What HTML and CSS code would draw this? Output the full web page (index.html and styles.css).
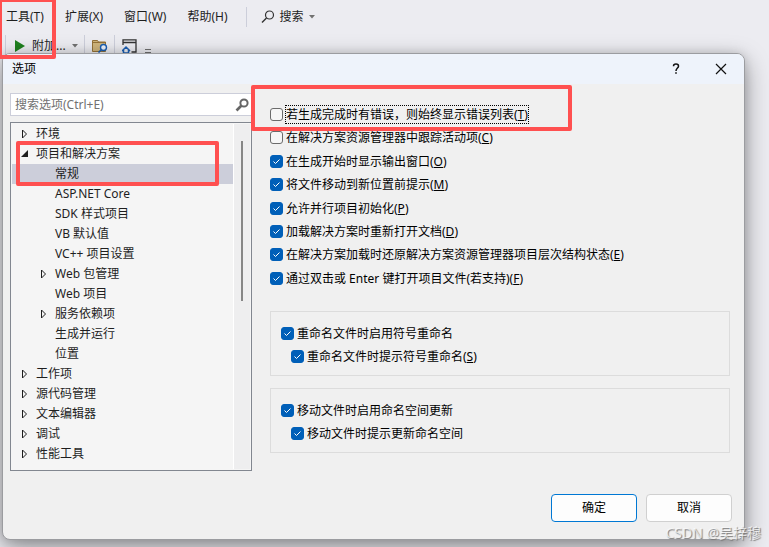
FILE: index.html
```
<!DOCTYPE html>
<html lang="zh-CN">
<head>
  <meta charset="UTF-8" />
  <meta name="viewport" content="width=device-width, initial-scale=1.0"/>
  <title>选项</title>
  <link rel="stylesheet" href="styles.css">
</head>
<body>
  <svg class="symbols" aria-hidden="true">
    <symbol id="closed" viewBox="0 0 8 10"><path d="M1.5 1v8l4-4z" fill="none" stroke="#1e1e1e"/></symbol>
    <symbol id="opened" viewBox="0 0 8 10"><path d="M7 1v7H0z" fill="#1e1e1e"/></symbol>
    <symbol id="down" viewBox="0 0 6 4"><path d="M0 0h6L3 3.5z" fill="#717171"/></symbol>
  </svg>

  <div class="menubar">
    <nav class="menus">
      <button type="button">工具(T)</button>
      <button type="button">扩展(X)</button>
      <button type="button">窗口(W)</button>
      <button type="button">帮助(H)</button>
    </nav>
    <button type="button" class="search-menu">
      <svg width="14" height="14" viewBox="0 0 14 14"><circle cx="8.5" cy="5" r="4" fill="none" stroke="#333" stroke-width="1.2"/><path d="M5.5 8L1 12.5" stroke="#333" stroke-width="1.4"/></svg>
      搜索
      <svg width="6" height="4"><use href="#down"/></svg>
    </button>
  </div>

  <div class="toolbar">
    <button type="button" class="run">
      <svg width="12" height="14" viewBox="0 0 12 14"><path d="M1 1v12l10-6z" fill="#1f801f"/></svg>
      附加...
      <svg width="6" height="4"><use href="#down"/></svg>
    </button>
    <button type="button" aria-label="在文件中查找">
      <svg width="16" height="14" viewBox="0 0 16 14"><path d="M.5 12.500V1.500h5l1 1.500h7v9.500z" fill="#d0b57c" stroke="#957338"/><path d="M.5 3.500h13" stroke="#957338"/><circle cx="11.500" cy="8.500" r="3" fill="#eef3fb" stroke="#1a5fb4" stroke-width="1.400"/><path d="M9.500 10.500L6.500 13.500" stroke="#1a5fb4" stroke-width="1.600"/></svg>
    </button>
    <button type="button" aria-label="主页窗口">
      <svg width="15" height="14" viewBox="0 0 15 14"><path d="M1 6V.8h13v12.200H9.500M1 3.500h13" fill="none" stroke="#333" stroke-width="1.300"/><path d="M0 12L4 8l4 4M1.500 11V14h5V11" fill="none" stroke="#1a5fb4" stroke-width="1.500"/></svg>
    </button>
    <svg class="overflow" width="6" height="5"><path d="M0 .5h6M0 3.500h6" stroke="#717171"/></svg>
  </div>

  <div class="dialog" role="dialog" aria-labelledby="title">
    <header class="titlebar">
      <h1 id="title">选项</h1>
      <button type="button" aria-label="帮助">
        <svg width="8" height="12" viewBox="0 0 8 12"><path d="M1.500 3.200C1.500 .4 6.500.4 6.500 3.200 6.500 5 4 5.200 4 8" fill="none" stroke="#111" stroke-width="1.500"/><path d="M3.200 9.200h1.600v1.600H3.200z" fill="#111"/></svg>
      </button>
      <button type="button" aria-label="关闭">
        <svg width="12" height="12" viewBox="0 0 12 12"><path d="M1 1l10 10M11 1L1 11" stroke="#111" stroke-width="1.200"/></svg>
      </button>
    </header>

    <form class="content">
      <div class="sidebar">
        <div class="search">
          <input type="text" placeholder="搜索选项(Ctrl+E)" aria-label="搜索选项" />
          <svg width="14" height="14" viewBox="0 0 14 14"><circle cx="9" cy="5" r="3.600" fill="none" stroke="#666" stroke-width="2"/><path d="M6.500 7.500L1.500 12.500" stroke="#666" stroke-width="2.600"/></svg>
        </div>
        <div class="tree">
          <ul>
            <li><button type="button"><svg><use href="#closed"/></svg>环境</button></li>
            <li>
              <button type="button"><svg><use href="#opened"/></svg>项目和解决方案</button>
              <ul>
                <li><button type="button" class="selected">常规</button></li>
                <li><button type="button">ASP.NET Core</button></li>
                <li><button type="button">SDK 样式项目</button></li>
                <li><button type="button">VB 默认值</button></li>
                <li><button type="button">VC++ 项目设置</button></li>
                <li><button type="button"><svg><use href="#closed"/></svg>Web 包管理</button></li>
                <li><button type="button">Web 项目</button></li>
                <li><button type="button"><svg><use href="#closed"/></svg>服务依赖项</button></li>
                <li><button type="button">生成并运行</button></li>
                <li><button type="button">位置</button></li>
              </ul>
            </li>
            <li><button type="button"><svg><use href="#closed"/></svg>工作项</button></li>
            <li><button type="button"><svg><use href="#closed"/></svg>源代码管理</button></li>
            <li><button type="button"><svg><use href="#closed"/></svg>文本编辑器</button></li>
            <li><button type="button"><svg><use href="#closed"/></svg>调试</button></li>
            <li><button type="button"><svg><use href="#closed"/></svg>性能工具</button></li>
          </ul>
          <div class="scrollbar"><div class="thumb"></div></div>
        </div>
      </div>

      <div class="settings">
        <div class="options">
          <label><input type="checkbox" /><span class="focused">若生成完成时有错误，则始终显示错误列表(<u>T</u>)</span></label>
          <label><input type="checkbox" /><span>在解决方案资源管理器中跟踪活动项(<u>C</u>)</span></label>
          <label><input type="checkbox" checked /><span>在生成开始时显示输出窗口(<u>O</u>)</span></label>
          <label><input type="checkbox" checked /><span>将文件移动到新位置前提示(<u>M</u>)</span></label>
          <label><input type="checkbox" checked /><span>允许并行项目初始化(<u>P</u>)</span></label>
          <label><input type="checkbox" checked /><span>加载解决方案时重新打开文档(<u>D</u>)</span></label>
          <label><input type="checkbox" checked /><span>在解决方案加载时还原解决方案资源管理器项目层次结构状态(<u>E</u>)</span></label>
          <label><input type="checkbox" checked /><span>通过双击或 Enter 键打开项目文件(若支持)(<u>F</u>)</span></label>
        </div>
        <div class="group">
          <label><input type="checkbox" checked /><span>重命名文件时启用符号重命名</span></label>
          <label class="nested"><input type="checkbox" checked /><span>重命名文件时提示符号重命名(<u>S</u>)</span></label>
        </div>
        <div class="group">
          <label><input type="checkbox" checked /><span>移动文件时启用命名空间更新</span></label>
          <label class="nested"><input type="checkbox" checked /><span>移动文件时提示更新命名空间</span></label>
        </div>
      </div>
    </form>

    <footer class="actions">
      <button type="button" class="primary">确定</button>
      <button type="button">取消</button>
    </footer>
  </div>

  <div class="mark mark-menu"></div>
  <div class="mark mark-tree"></div>
  <div class="mark mark-option"></div>
  <div class="watermark">CSDN @吴梓穆</div>
</body>
</html>
```
FILE: styles.css
```
* {
  box-sizing: border-box;
}
body {
  position: relative;
  min-height: 100vh;
  margin: 0;
  overflow: hidden;
  background: #ececf1;
  color: #1e1e1e;
  font-family: "Noto Sans", "Noto Sans CJK SC", sans-serif;
  font-size: 12px;
  line-height: 20px;
}
button, input {
  font: inherit;
  color: inherit;
}
button {
  padding: 0;
  border: none;
  background: none;
}
svg {
  flex: none;
}
.symbols {
  position: absolute;
  width: 0;
  height: 0;
}

/* main window */
.menubar {
  display: flex;
  align-items: center;
  gap: 18px;
  height: 34px;
  padding-left: 6px;
}
.menus {
  display: flex;
  gap: 21px;
}
.search-menu {
  display: flex;
  align-items: center;
  gap: 5px;
  padding-left: 14px;
  border-left: 1px solid #ccceda;
}
.toolbar {
  display: flex;
  align-items: center;
  height: 24px;
  padding-left: 5px;
}
.toolbar button {
  display: flex;
  align-items: center;
  height: 22px;
  padding: 0 6px 0 7px;
  border-left: 1px solid #ccceda;
}
.toolbar .run {
  gap: 6px;
  padding-left: 8px;
}
.toolbar .overflow {
  margin: 10px 0 0 2px;
}

/* dialog */
.dialog {
  position: absolute;
  top: 53px;
  right: 24px;
  bottom: 7px;
  left: 2px;
  display: flex;
  flex-direction: column;
  border: 1px solid #9b9ca0;
  border-radius: 8px;
  background: #f0f0f0;
  box-shadow: 0 8px 24px rgba(0, 0, 0, 0.4), 0 0 10px rgba(0, 0, 0, 0.12);
}
.titlebar {
  display: flex;
  align-items: center;
  height: 30px;
  padding: 0 1px 0 9px;
  border-radius: 7px 7px 0 0;
  background: #eef3fb;
}
.titlebar h1 {
  flex: 1;
  margin: 0;
  color: #000;
  font-size: 12px;
  font-weight: normal;
}
.titlebar button {
  display: grid;
  place-items: center;
  width: 45px;
  height: 30px;
}
.content {
  display: flex;
  flex: 1;
  gap: 18px;
  min-height: 0;
  padding: 9px 14px 0 7px;
}
.sidebar {
  display: flex;
  flex-direction: column;
  gap: 6px;
  width: 242px;
}
.search {
  display: flex;
  align-items: center;
  height: 23px;
  padding: 0 2px 0 4px;
  border: 1px solid #ccceda;
  background: #fff;
}
.search input {
  flex: 1;
  min-width: 0;
  height: 21px;
  padding: 0;
  border: none;
  outline: none;
  background: none;
}
.search input::placeholder {
  color: #717171;
}
.tree {
  display: flex;
  flex: 1;
  min-height: 0;
  padding: 1px;
  overflow: hidden;
  border: 1px solid #828790;
  background: #f5f5f5;
}
.tree ul {
  flex: 1;
  margin: 0;
  padding: 0;
  list-style: none;
}
.tree button {
  display: flex;
  align-items: center;
  gap: 7px;
  width: 100%;
  height: 20px;
  padding-left: 24px;
}
.tree svg {
  width: 8px;
  height: 10px;
  margin-left: -15px;
}
.tree ul ul button {
  padding-left: 43px;
}
.tree .selected {
  background: #ccceda;
}
.scrollbar {
  width: 17px;
  padding: 17px 0 0 7px;
  border-left: 1px solid #fff;
  background: #eeeeef;
}
.thumb {
  width: 2px;
  height: 160px;
  background: #868686;
}

/* options page */
.settings {
  flex: 1;
  min-width: 0;
  padding-top: 10px;
  color: #000;
}
.options {
  display: grid;
  grid-template-rows: repeat(8, 1fr);
  height: 187px;
  margin-bottom: 21px;
}
.settings label {
  display: flex;
  align-items: center;
  gap: 2px;
  height: 23px;
  white-space: nowrap;
}
.settings input {
  flex: none;
  appearance: none;
  width: 13px;
  height: 13px;
  margin: 0;
  border: 1px solid #6b6b6b;
  border-radius: 3px;
  background: #f6f6f6;
}
.settings input:checked {
  border-color: #005fb8;
  background: #005fb8 url("data:image/svg+xml,%3Csvg xmlns='http://www.w3.org/2000/svg' viewBox='0 0 11 11'%3E%3Cpath d='M2.500 5.500l2 2L8.500 3.500' fill='none' stroke='white'/%3E%3C/svg%3E");
}
.settings span {
  padding: 0 1px;
  line-height: 17px;
}
.settings .focused {
  padding: 0;
  border: 1px dotted #000;
}
.group {
  height: 65px;
  padding: 10px;
  border: 1px solid #dcdcdc;
}
.group + .group {
  margin-top: 12px;
}
.group .nested {
  padding-left: 10px;
}
.actions {
  display: flex;
  justify-content: flex-end;
  gap: 9px;
  padding: 23px 12px 17px;
}
.actions button {
  width: 86px;
  height: 28px;
  border: 1px solid #d0d0d0;
  border-radius: 4px;
  background: #fdfdfd;
  color: #000;
}
.actions .primary {
  border-color: #0078d4;
}

/* red highlight frames */
.mark {
  position: absolute;
  border: 4px solid #ff5050;
  border-radius: 2px;
  pointer-events: none;
}
.mark-menu {
  top: -2px;
  left: -2px;
  width: 58px;
  height: 61px;
}
.mark-tree {
  top: 141px;
  left: 16px;
  width: 203px;
  height: 45px;
}
.mark-option {
  top: 85px;
  left: 251px;
  width: 321px;
  height: 46px;
}
.watermark {
  position: absolute;
  right: 8px;
  bottom: 4px;
  color: rgba(255, 255, 255, 0.7);
  font-size: 14px;
  text-shadow: 1px 1px 1px #777;
}
```
